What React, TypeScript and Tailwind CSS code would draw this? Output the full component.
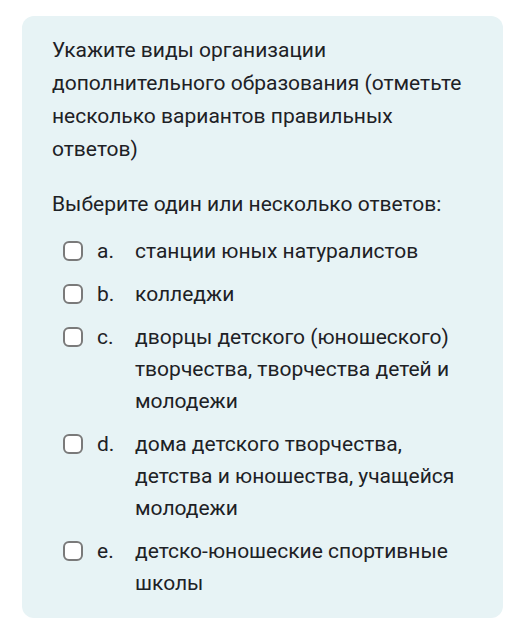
import React from "react";

const options = [
  { l: "a.", t: "станции юных натуралистов" },
  { l: "b.", t: "колледжи" },
  { l: "c.", t: "дворцы детского (юношеского) творчества, творчества детей и молодежи" },
  { l: "d.", t: "дома детского творчества, детства и юношества, учащейся молодежи" },
  { l: "e.", t: "детско-юношеские спортивные школы" },
];

export default function App() {
  return (
    <div className="w-[515px] h-[627px] bg-white pt-[16px] pl-[22px] pr-[12px]" style={{ fontFamily: "Roboto, 'Noto Sans', sans-serif" }}>
      <div className="bg-[#e7f3f5] rounded-[12px] w-[481px] h-[602px] pl-[30px] pr-[24px] pt-[18px] text-[#1d2125]">
        <div className="text-[21px] leading-[33px] w-[415px]">
          Укажите виды организации дополнительного образования (отметьте несколько вариантов правильных ответов)
        </div>
        <div className="text-[21px] leading-[33px] mt-[22px]">Выберите один или несколько ответов:</div>
        <div className="mt-[14px] flex flex-col gap-[11px]">
          {options.map((o) => (
            <div key={o.l} className="flex items-start pl-[11px]">
              <div className="w-[20px] h-[20px] mt-[6px] rounded-[6px] border-2 border-[#7a7a7a] bg-white shrink-0" />
              <div className="w-[38px] ml-[14px] text-[21px] leading-[32px] shrink-0">{o.l}</div>
              <div className="text-[21px] leading-[32px] w-[320px]">{o.t}</div>
            </div>
          ))}
        </div>
      </div>
    </div>
  );
}
